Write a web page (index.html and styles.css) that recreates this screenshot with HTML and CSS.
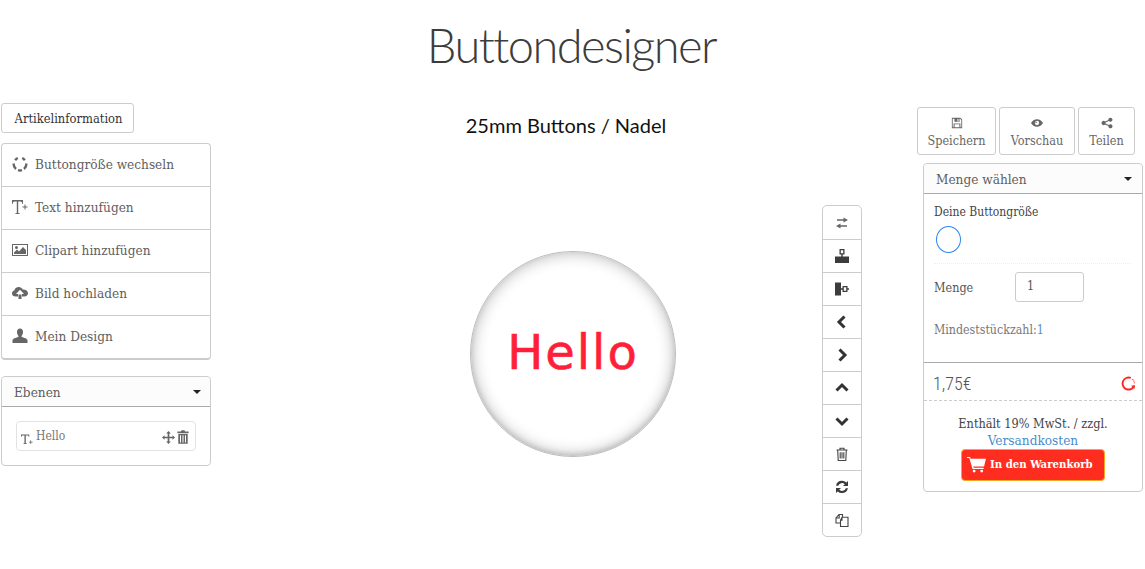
FILE: index.html
```html
<!DOCTYPE html>
<html lang="de">
<head>
<meta charset="utf-8">
<title>Buttondesigner</title>
<link rel="stylesheet" href="styles.css">
</head>
<body>
<h1 class="page-title">Buttondesigner</h1>
<main class="layout">
  <aside class="left">
    <button class="info-btn">Artikelinformation</button>
    <ul class="menu">
      <li class="menu-item">
        <svg class="menu-icon menu-icon-swap" viewBox="0 0 16 16"><path d="M3.200 4.200A6.400 6.400 0 0 1 5.800 2M10.200 2a6.400 6.400 0 0 1 2.600 2.200M14.300 7.500a6.400 6.400 0 0 1-2.300 5.500M4 13a6.400 6.400 0 0 1-2.300-5.500M6 14.200a6.400 6.400 0 0 0 4 0"/></svg>
        <span>Buttongröße wechseln</span>
      </li>
      <li class="menu-item">
        <svg class="menu-icon" viewBox="0 0 16 16"><path d="M0 1h11v4h-.6c-.2-1.700-.7-2.500-2.200-2.500H6.200v10.800c0 .7.300.9 1.500 1V15H3.300v-.7c1.200-.1 1.500-.3 1.500-1V2.500H2.800C1.300 2.500.8 3.300.6 5H0zM12.500 5.500h1v2h2v1h-2v2h-1v-2h-2v-1h2z"/></svg>
        <span>Text hinzufügen</span>
      </li>
      <li class="menu-item">
        <svg class="menu-icon" viewBox="0 0 16 16"><path fill-rule="evenodd" d="M0 2h16v12H0zM1 3v10h14V3zM2 12v-1.500l3-3 2 2 4-4.500 3 3V12zM4.500 4A1.500 1.500 0 1 1 4.500 7 1.500 1.500 0 0 1 4.500 4z"/></svg>
        <span>Clipart hinzufügen</span>
      </li>
      <li class="menu-item">
        <svg class="menu-icon" viewBox="0 0 16 16"><path fill-rule="evenodd" d="M3.500 11.500C1.500 11.500 0 10.200 0 8.400 0 6.900 1 5.800 2.400 5.500 2.700 3.500 4.500 2 6.700 2c1.800 0 3.300 1 4 2.400C13.800 4.300 16 6 16 8.300c0 1.800-1.500 3.200-3.500 3.200H10V9h2L8 4.800 4 9h2v2.500zM6.500 9.500h3V14h-3z"/></svg>
        <span>Bild hochladen</span>
      </li>
      <li class="menu-item">
        <svg class="menu-icon" viewBox="0 0 16 16"><path d="M8 0.500c1.900 0 3 1.500 3 3.500 0 1.500-.5 2.800-1.300 3.700-.4.500-.3 1.100.3 1.400 2.200.9 5.500 1.500 5.500 3.400V15H.5v-2.500c0-1.900 3.300-2.500 5.500-3.400.6-.3.700-.9.300-1.400C5.500 6.800 5 5.500 5 4c0-2 1.100-3.500 3-3.500z"/></svg>
        <span>Mein Design</span>
      </li>
    </ul>
    <section class="panel layers">
      <header class="panel-head layers-head"><span>Ebenen</span><i class="caret"></i></header>
      <div class="layers-body">
        <div class="layer">
          <svg class="layer-t" viewBox="0 0 16 16"><path d="M0 2h11v3h-.7c-.2-1.200-.6-1.800-2-1.800H6.400v9.900c0 .6.300.8 1.300.9v.8H3.300V14c1-.1 1.300-.3 1.300-.9V3.200H2.700c-1.400 0-1.800.6-2 1.800H0zM12.500 9.500h1v2h2v1h-2v2h-1v-2h-2v-1h2z"/></svg>
          <span class="layer-name">Hello</span>
          <svg class="layer-move" viewBox="0 0 14 14"><path d="M7 0l2.500 2.700H7.900v3.400h3.400V4.500L14 7l-2.700 2.500V7.900H7.900v3.400h1.600L7 14l-2.500-2.700h1.600V7.900H2.700v1.600L0 7l2.700-2.500v1.600h3.400V2.700H4.500z"/></svg>
          <svg class="layer-trash" viewBox="0 0 14 16"><path fill-rule="evenodd" d="M4.500 1.500 5.300 0h3.400l.8 1.500H13.500V3.500H.5V1.500zM1.500 4.500h11V16h-11zM3.500 6v8.500h1.200V6zM6.400 6v8.500h1.200V6zM9.300 6v8.500h1.200V6z"/></svg>
        </div>
      </div>
    </section>
  </aside>

  <section class="center">
    <h2 class="product-title">25mm Buttons / Nadel</h2>
    <div class="stage">
      <div class="badge"><span class="badge-text">Hello</span></div>
      <div class="tools">
        <div class="tool"><svg class="soft" viewBox="0 0 14 14"><path d="M8.500 1.500 13 4 8.500 6.500V4.800H2V3.200h6.500zM5.500 7.500V9.200H12v1.600H5.500v1.700L1 10z"/></svg></div>
        <div class="tool"><svg viewBox="0 0 14 14"><path fill-rule="evenodd" d="M4.500 0h5v5.500h-1.800v2H14V14H0V7.500h6.300v-2H4.500zM5.800 1.300v2.900h2.400V1.300z"/></svg></div>
        <div class="tool"><svg viewBox="0 0 14 14"><path fill-rule="evenodd" d="M0 0.500h6V13.500H0zM6 6.300H7.500V4h5v2.300H14v1.400h-1.500V10h-5V7.700H6zM8.800 5.300v3.400h2.400V5.300z"/></svg></div>
        <div class="tool"><svg class="chev" viewBox="0 0 14 14"><path d="M9.500 1.500 4 7l5.500 5.500"/></svg></div>
        <div class="tool"><svg class="chev" viewBox="0 0 14 14"><path d="M4.500 1.500 10 7l-5.500 5.500"/></svg></div>
        <div class="tool"><svg class="chev" viewBox="0 0 14 14"><path d="M1.500 9.500 7 4l5.500 5.500"/></svg></div>
        <div class="tool"><svg class="chev" viewBox="0 0 14 14"><path d="M1.500 4.500 7 10l5.500-5.500"/></svg></div>
        <div class="tool"><svg class="line" viewBox="0 0 14 14"><path d="M1.500 3h11M5 3V1.200h4V3M2.700 3l.5 10.500h7.600L11.300 3M5.200 5.200v6.300M7 5.200v6.300M8.800 5.200v6.300"/></svg></div>
        <div class="tool"><svg viewBox="0 0 14 14"><path d="M7 .8a6.200 6.200 0 0 1 4.300 1.800L13 1v5H8l1.800-1.800A4 4 0 0 0 3.200 5.800H1A6.200 6.200 0 0 1 7 .8zM1 8h5L4.200 9.800a4 4 0 0 0 6.600-1.600H13A6.200 6.200 0 0 1 2.700 11.400L1 13z"/></svg></div>
        <div class="tool"><svg class="line" viewBox="0 0 14 14"><path d="M5.500 10H1V5l3-3.500h3.500v2.700M4.200 1.500V5H1M7 4.200h6v9.300H5.500V7.200zM7 4.200v3H5.500"/></svg></div>
      </div>
    </div>
  </section>

  <aside class="right">
    <div class="actions">
      <button class="action action-save">
        <svg viewBox="0 0 14 14"><path fill-rule="evenodd" d="M1 1h10l2 2v10H1zM2 2v10h1V7.500h8V12h1V3.500L10.500 2H10v3.500H4V2zM4.200 8.500V12h5.600V8.500zM7.500 2.300v2.600h1.300V2.300z"/></svg>
        <span>Speichern</span>
      </button>
      <button class="action action-view">
        <svg viewBox="0 0 14 14"><path fill-rule="evenodd" d="M7 2.500c3 0 5.500 1.800 7 4.500-1.500 2.700-4 4.500-7 4.500S1.500 9.700 0 7c1.500-2.700 4-4.500 7-4.500zM7 4.500a2.500 2.500 0 1 0 0 5 2.500 2.500 0 0 0 0-5zM6 5.300a.9.900 0 1 1 0 1.800.9.900 0 0 1 0-1.800z"/></svg>
        <span>Vorschau</span>
      </button>
      <button class="action action-share">
        <svg viewBox="0 0 14 14"><path d="M11 .8a2.400 2.400 0 1 1-1.800 4L5.300 6.500a2.500 2.500 0 0 1 0 1l3.900 1.700a2.400 2.400 0 1 1-.6 1.300L4.700 8.800a2.400 2.400 0 1 1 0-3.600l3.900-1.700A2.400 2.400 0 0 1 11 .8z"/></svg>
        <span>Teilen</span>
      </button>
    </div>
    <section class="panel order">
      <header class="panel-head order-head"><span>Menge wählen</span><i class="caret"></i></header>
      <div class="order-body">
        <div class="size-label">Deine Buttongröße</div>
        <div class="size-dot"></div>
        <div class="qty">
          <label class="qty-label">Menge</label>
          <div class="qty-input">1</div>
        </div>
        <div class="min">Mindeststückzahl:<span class="min-val">1</span></div>
      </div>
      <div class="price-row">
        <span class="price">1,75€</span>
        <svg class="spinner" viewBox="0 0 16 16"><path class="spin-a" d="M10.500 2.100A6.400 6.400 0 1 0 14 10.500"/><path class="spin-b" d="M12.200 3.300A6.400 6.400 0 0 1 14.400 8"/><path class="spin-c" d="M15 9.800l-4.300.6 3.600 3.200z"/></svg>
      </div>
      <div class="checkout">
        <div class="tax">Enthält 19% MwSt. / zzgl.</div>
        <a class="ship">Versandkosten</a>
        <button class="cart-btn">
          <svg viewBox="0 0 20 18"><path d="M0 1h3.200l.6 2H20l-2 8H6.500l.4 1.500H17.500v1.200H5.800L2.400 2.200H0z"/><circle cx="7.500" cy="16" r="1.500"/><circle cx="15.500" cy="16" r="1.500"/></svg>
          <span>In den Warenkorb</span>
        </button>
      </div>
    </section>
  </aside>
</main>
</body>
</html>
```

FILE: styles.css
```css
* { box-sizing: border-box; }
html, body { margin: 0; padding: 0; background: #fff; }
body {
  font-family: "DejaVu Serif Condensed", "DejaVu Serif", serif;
  font-stretch: condensed;
  color: #555;
  height: 569px;
  overflow: hidden;
}
button { font: inherit; font-stretch: condensed; background: #fff; cursor: pointer; }
.page-title {
  margin: 0;
  padding: 17px 2px 0 0;
  height: 103px;
  text-align: center;
  font-family: Lato, sans-serif;
  font-weight: 300;
  font-size: 47px;
  line-height: 56px;
  letter-spacing: -1.550px;
  color: #3c3c3c;
}
.layout {
  display: grid;
  grid-template-columns: 210px 706px 228px;
  margin-left: 1px;
}

/* left column */
.left { display: flex; flex-direction: column; align-items: flex-start; }
.info-btn {
  width: 133px;
  height: 30px;
  padding: 0 0 0 2px;
  border: 1px solid #ccc;
  border-radius: 3px;
  font-size: 12.800px;
  color: #333;
}
.menu {
  list-style: none;
  margin: 10px 0 0;
  padding: 0;
  width: 210px;
  border: 1px solid #ccc;
  border-bottom-width: 2px;
  border-radius: 4px;
}
.menu-item {
  display: flex;
  align-items: center;
  height: 43px;
  padding: 0 0 3px 10px;
  gap: 7px;
  border-bottom: 1px solid #ccc;
  font-size: 13.500px;
  color: #5e5e5e;
}
.menu-item:last-child { border-bottom: 0; height: 42px; }
.menu-icon { width: 16px; height: 16px; fill: #666; flex: none; }
.menu-icon-swap { fill: none; stroke: #666; stroke-width: 2.400; }
.panel {
  border: 1px solid #ccc;
  border-radius: 4px;
  background: #fff;
}
.panel-head {
  display: flex;
  align-items: center;
  justify-content: space-between;
  background: #fcfcfc;
  border-bottom: 1px solid #aaa;
  border-radius: 4px 4px 0 0;
  color: #5e5e5e;
}
.caret {
  width: 0;
  height: 0;
  border: 4px solid transparent;
  border-top-color: #222;
  border-bottom: 0;
}
.layers { width: 210px; height: 90px; margin-top: 16px; }
.layers-head { height: 30px; padding: 0 9px 0 12px; font-size: 13.500px; }
.layers-body { padding: 14px 14px 0; }
.layer {
  display: flex;
  align-items: flex-start;
  width: 180px;
  height: 30px;
  padding: 7px 5px 0 4px;
  border: 1px solid #e2e2e2;
  border-radius: 4px;
  font-size: 12px;
  color: #777;
}
.layer-t { width: 12px; height: 14px; margin-top: 3px; fill: #666; flex: none; }
.layer-name { margin-left: 3px; flex: 1; }
.layer-move { width: 13px; height: 13px; margin-top: 2px; fill: #666; }
.layer-trash { width: 12px; height: 14px; margin: 1px 1px 0 2px; fill: #666; }

/* center column */
.center { padding-left: 4px; }
.product-title {
  margin: 0;
  height: 102px;
  padding-top: 8px;
  text-align: center;
  font-family: Lato, sans-serif;
  font-weight: 400;
  font-size: 20px;
  line-height: 28px;
  color: #111;
}
.stage { display: flex; align-items: flex-start; padding-left: 255px; }
.badge {
  display: flex;
  align-items: center;
  justify-content: center;
  width: 206px;
  height: 206px;
  margin-top: 46px;
  padding-bottom: 4px;
  border-radius: 50%;
  background: #fff;
  border: 1px solid #bdbdbd;
  box-shadow: inset 0 0 16px rgba(0, 0, 0, .3), inset 0 -2px 5px rgba(0, 0, 0, .12);
}
.badge-text {
  font-family: "DejaVu Sans", sans-serif;
  font-stretch: normal;
  font-weight: 400;
  font-size: 48px;
  line-height: 60px;
  letter-spacing: 2px;
  color: #ff1f3a;
  -webkit-text-stroke: 0.6px #ff1f3a;
}
.tools {
  width: 40px;
  margin-left: 146px;
  border: 1px solid #ccc;
  border-radius: 5px;
}
.tool {
  display: flex;
  align-items: center;
  justify-content: center;
  height: 33px;
  border-bottom: 1px solid #ccc;
}
.tool:first-child { height: 34px; }
.tool:last-child { border-bottom: 0; height: 32px; }
.tool svg { width: 14px; height: 14px; fill: #3c3c3c; }
.tool svg.soft { fill: #666; }
.tool svg.chev { fill: none; stroke: #333; stroke-width: 3; }
.tool svg.line { fill: none; stroke: #444; stroke-width: 1.100; }

/* right column */
.right { display: flex; flex-direction: column; align-items: flex-end; padding-right: 2px; }
.actions { display: flex; gap: 3px; margin: 4px 8px 0 0; }
.action {
  display: flex;
  flex-direction: column;
  align-items: center;
  height: 48px;
  padding: 9px 0 0;
  border: 1px solid #ccc;
  border-radius: 3px;
  font-size: 12.500px;
  line-height: 17px;
  color: #666;
}
.action svg { width: 12px; height: 12px; fill: #666; margin-bottom: 3px; }
.action-save { width: 79px; }
.action-view { width: 76px; }
.action-share { width: 57px; }
.order { width: 220px; height: 329px; margin-top: 8px; display: flex; flex-direction: column; }
.order-head { height: 30px; flex: none; padding: 0 10px 0 12px; font-size: 13.500px; }
.order-body { height: 168px; padding: 10px 10px 0; flex: none; }
.size-label { font-size: 12px; line-height: 16px; color: #444; }
.size-dot {
  width: 25px;
  height: 27px;
  margin: 6px 0 10px 2px;
  border: 1px solid #2d86f0;
  border-radius: 50%;
}
.qty {
  display: flex;
  align-items: center;
  padding-top: 8px;
  border-top: 1px dotted #eee;
}
.qty-label { width: 81px; font-size: 12.500px; color: #555; }
.qty-input {
  width: 69px;
  height: 30px;
  padding: 0 0 3px 11px;
  display: flex;
  align-items: center;
  border: 1px solid #ccc;
  border-radius: 3px;
  font-size: 12.500px;
}
.min { margin-top: 20px; font-size: 12.300px; line-height: 16px; color: #777; }
.min-val { color: #5b8fc7; }
.price-row {
  display: flex;
  align-items: center;
  justify-content: space-between;
  height: 39px;
  flex: none;
  padding: 3px 6px 0 9px;
  border-top: 1px solid #aaa;
  border-bottom: 1px dashed #ccc;
}
.price { font-family: Roboto, sans-serif; font-weight: 300; font-size: 18px; color: #555; }
.spinner { width: 15px; height: 15px; fill: none; stroke: #f22; stroke-width: 2; }
.spin-b { stroke-width: 1.200; stroke-dasharray: 1 1; }
.spin-c { fill: #f22; stroke: none; }
.checkout { display: flex; flex-direction: column; align-items: center; padding-top: 14px; }
.tax { font-size: 12.600px; line-height: 18px; color: #444; }
.ship { margin-top: -2px; font-size: 13.500px; line-height: 18px; color: #4a8ccb; }
.cart-btn {
  display: flex;
  align-items: center;
  gap: 4px;
  width: 144px;
  height: 32px;
  margin-top: 0;
  padding: 0 0 2px 5px;
  border: 1px solid #f5a623;
  border-radius: 4px;
  background: #ff2d20;
  color: #fff;
  font-weight: 700;
  font-size: 11.300px;
  white-space: nowrap;
}
.cart-btn svg { width: 19px; height: 17px; fill: #fff; flex: none; }
```
